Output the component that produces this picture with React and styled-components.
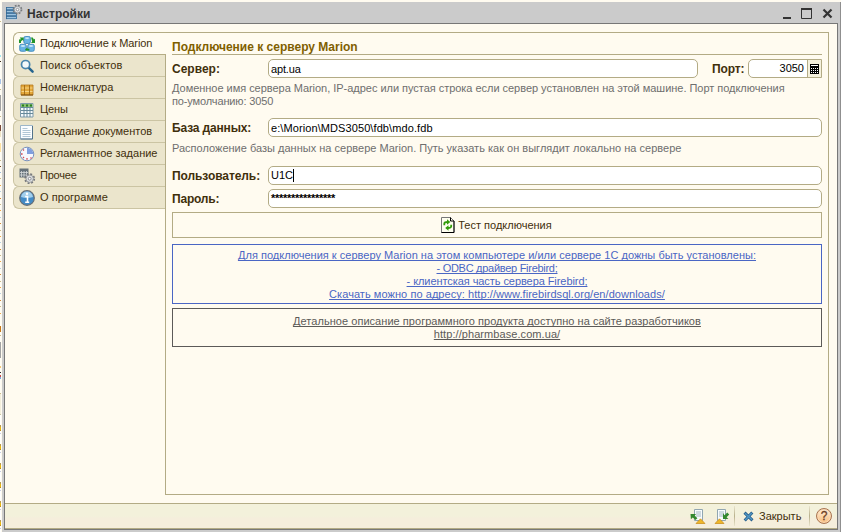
import React from "react";
import styled, { createGlobalStyle } from "styled-components";

const GlobalStyle = createGlobalStyle`
  html, body { margin: 0; padding: 0; overflow: hidden; }
  body {
    background: #fffbf0;
    font: 11px/13px "Liberation Sans", Arial, sans-serif;
    color: #3f2f0c;
  }
  svg { display: block; flex: none; }
`;

const Screen = styled.div`
  display: flex;
  width: 841px;
  height: 532px;
`;

const EdgeStrip = styled.div`
  display: flex;
  flex-direction: column;
  width: 1px;
  margin-right: 1px;
`;

const EdgeMark = styled.div`
  height: ${(p) => p.$size}px;
  flex: none;
  background: ${(p) => p.$color};
`;

const Window = styled.div`
  display: flex;
  flex-direction: column;
  box-sizing: border-box;
  width: 839px;
  height: 530px;
  margin-top: 2px;
  background: #cbcbcb;
  border-right: 1px solid #8f8f8f;
`;

const TitleBar = styled.div`
  display: flex;
  align-items: center;
  height: 21px;
  flex: none;
  padding: 0 2px 0 4px;
`;

const Title = styled.div`
  flex: 1;
  margin-left: 4px;
  padding-top: 3px;
  font-size: 12px;
  font-weight: 700;
  color: #333;
`;

const Client = styled.div`
  display: flex;
  flex-direction: column;
  box-sizing: border-box;
  width: 834px;
  height: 507px;
  margin-left: 2px;
  border: 1px solid #777;
  background: #fffbf0;
`;

const Content = styled.div`
  display: flex;
  box-sizing: border-box;
  height: 479px;
  padding: 8px 8px 8px 8px;
`;

const Tabs = styled.div`
  width: 152px;
  flex: none;
`;

const Tab = styled.div`
  display: flex;
  align-items: center;
  box-sizing: border-box;
  position: relative;
  z-index: ${(p) => (p.$active ? 1 : 0)};
  width: ${(p) => (p.$active ? 153 : 152)}px;
  height: 23px;
  margin-bottom: -1px;
  padding-left: 4px;
  border: 1px solid ${(p) => (p.$active ? "#b5ad85" : "#cbc4a3")};
  border-right: 0;
  border-radius: 6px 0 0 6px;
  background: ${(p) => (p.$active ? "#fffbf0" : "#ebe5cc")};
`;

const TabIcon = styled.div`
  width: 18px;
  height: 18px;
  flex: none;
`;

const TabText = styled.span`
  margin-left: 4px;
  white-space: nowrap;
  letter-spacing: ${(p) => p.$track || 0}px;
`;

const Panel = styled.div`
  box-sizing: border-box;
  width: 664px;
  height: 463px;
  padding: 0 6px;
  border: 1px solid #b3ab85;
`;

const Heading = styled.div`
  box-sizing: border-box;
  height: 22px;
  padding-top: 8px;
  border-bottom: 1px solid #b3ab85;
  font-size: 12px;
  font-weight: 700;
  color: #7f5f00;
`;

const FieldRow = styled.div`
  display: flex;
  height: 19px;
  margin-top: ${(p) => p.$gap}px;
`;

const Label = styled.div`
  width: ${(p) => p.$width}px;
  margin-left: ${(p) => p.$left || 0}px;
  flex: none;
  font-size: 12px;
  font-weight: 700;
  line-height: 20px;
  letter-spacing: ${(p) => p.$track || 0}px;
  white-space: nowrap;
`;

const Field = styled.div`
  display: flex;
  align-items: center;
  box-sizing: border-box;
  width: ${(p) => p.$width}px;
  height: 19px;
  padding-left: 2px;
  padding-top: ${(p) => p.$drop || 0}px;
  border: 1px solid #b3ab85;
  border-radius: 5px;
  background: #fff;
  color: #000;
  letter-spacing: ${(p) => p.$track || 0}px;
`;

const PortField = styled(Field)`
  justify-content: flex-end;
  border-radius: 5px 0 0 5px;
`;

const CalcButton = styled.div`
  display: flex;
  align-items: center;
  justify-content: center;
  width: 13px;
  height: 17px;
  margin-left: 3px;
  border-left: 1px solid #b3ab85;
  background: #f4f0dc;
`;

const Caret = styled.span`
  width: 1px;
  height: 13px;
  background: #000;
`;

const Password = styled.span`
  font-weight: 700;
  letter-spacing: -0.28px;
`;

const Hint = styled.div`
  margin-top: ${(p) => p.$gap}px;
  color: #6e6e6e;
  white-space: nowrap;
`;

const Line = styled.div`
  height: 13px;
  white-space: nowrap;
  letter-spacing: ${(p) => p.$track || 0}px;
`;

const TestButton = styled.div`
  display: flex;
  align-items: center;
  justify-content: center;
  gap: 3px;
  box-sizing: border-box;
  height: 26px;
  margin-top: 4px;
  padding-right: 1px;
  border: 1px solid #b3ab85;
`;

const Notice = styled.div`
  box-sizing: border-box;
  height: ${(p) => p.$height}px;
  margin-top: ${(p) => p.$gap}px;
  padding-top: ${(p) => p.$inset}px;
  border: 1px solid ${(p) => p.$color};
  color: ${(p) => p.$color};
  text-align: center;
  text-decoration: underline;
  text-decoration-skip-ink: none;
  text-underline-offset: 1px;
  text-decoration-thickness: 1px;
`;

const Footer = styled.div`
  display: flex;
  align-items: center;
  justify-content: flex-end;
  box-sizing: border-box;
  height: 26px;
  padding-right: 5px;
  border-top: 1px solid #b3ab85;
  border-bottom: 1px solid #b3ab85;
  background: linear-gradient(#f3f1db 0, #f3f1db 50%, #f5eedc 60%, #f5eedc 100%);
`;

const FileTools = styled.div`
  display: flex;
  gap: 8px;
`;

const Separator = styled.div`
  width: 1px;
  height: 20px;
  margin: 0 ${(p) => p.$right}px 0 ${(p) => p.$left}px;
  background: linear-gradient(#e9e4cc, #b8b08c, #e9e4cc);
`;

const CloseText = styled.span`
  margin-left: 5px;
  width: 45px;
`;

const ICON = { width: 18, height: 18, viewBox: "0 0 18 18" };

const Gear = ({ x, y, s = 1 }) => (
  <g transform={`translate(${x} ${y}) scale(${s})`}>
    <circle r="4.4" fill="none" stroke="#77797c" strokeWidth="2" strokeDasharray="1.9 1.55" />
    <circle r="3.7" fill="#dcdee0" stroke="#898b8e" strokeWidth=".8" />
    <circle r="1.4" fill="#fff" stroke="#77797c" strokeWidth=".8" />
  </g>
);

const TitleIcon = () => (
  <svg width="17" height="17" viewBox="0 0 17 17">
    <path d="M1 3.5h10v12H1z" fill="#cfe2f0" />
    {[3, 6, 9, 12].map((y) => (
      <rect key={y} x=".5" y={y + 0.5} width="10" height="2.2" fill="#9cc3e0" stroke="#2f6795" strokeWidth=".8" />
    ))}
    <Gear x={11.5} y={5.6} s={0.9} />
  </svg>
);

const Cube = ({ x, y }) => (
  <g transform={`translate(${x} ${y})`}>
    <rect x=".5" y=".5" width="6.6" height="7" rx="1.6" fill="#69b4e4" stroke="#3480b9" strokeWidth=".8" />
    <path d="M1.2 2.1Q3.8.2 6.4 2.1 3.8 4.2 1.2 2.1Z" fill="#c8e8fa" />
  </g>
);

const ServersIcon = () => (
  <svg {...ICON}>
    <Cube x={5.3} y={1} />
    <Cube x={1.2} y={8.8} />
    <Cube x={9.2} y={8.8} />
    <g fill="#21942b">
      <path d="M1 8V4.6L3 4.2 1.8 2.4H5.6V6L4.4 5 3 6.4V8Z" />
      <path d="M13 2.4h1.8l1 2.2 1.2-.8V8h-4l1.1-1.4Z" />
      <path d="M7 14.6l2.4-2v1.2h2v1.6h-2v1.2Z" />
    </g>
  </svg>
);

const SearchIcon = () => (
  <svg {...ICON}>
    <path d="M10.8 10.8L14.6 14.6" stroke="#26658f" strokeWidth="2.5" strokeLinecap="round" />
    <circle cx="7.6" cy="7.6" r="4.1" fill="#f3f9fa" stroke="#4a86ad" strokeWidth="1.7" />
  </svg>
);

const BoxIcon = () => (
  <svg {...ICON}>
    <path d="M3 6h12v10H3z" fill="#e4a83b" stroke="#b47a20" strokeWidth=".8" />
    <path d="M3.5 9h11M3.5 12.5h11" stroke="#f6d384" />
    <path d="M6.5 6v10M11.5 6v10" stroke="#a06a16" strokeWidth=".9" />
    <path d="M3 16h12" stroke="#7d4d0b" />
  </svg>
);

const PricesIcon = () => (
  <svg {...ICON}>
    <path d="M2.5 2.5h12.5v13.5H2.5z" fill="#f5fafc" stroke="#7f9bab" />
    <path d="M3 3h11.5v3H3z" fill="#8bbd70" />
    <path d="M3 6.5h12M3 9.5h12M3 12.5h12M6 6v10M9 6v10M12 6v10" stroke="#66899b" />
    <path d="M4 4.5h2M8 4.5h2M12 4.5h2" stroke="#267f24" strokeWidth="1.8" />
  </svg>
);

const DocumentIcon = () => (
  <svg {...ICON}>
    <path d="M2.5 2.5h12v13.5h-12z" fill="#fbfdff" stroke="#9db6c9" />
    <path d="M14.5 3v13h-12" fill="none" stroke="#52728a" />
    <path d="M4.5 5.5h5M4.5 7.5h8M4.5 9.5h8M4.5 11.5h8M4.5 13.5h8" stroke="#b0c6d6" />
  </svg>
);

const ClockIcon = () => (
  <svg {...ICON}>
    <circle cx="9" cy="9" r="6.8" fill="#f6f8ff" stroke="#7890bb" />
    <path d="M9 9V2.8A6.2 6.2 0 0 1 15.2 9Z" fill="#7f9ede" />
    <path d="M5 4.5l1 1M3 9h1.6M9 13v1.8M5 13l1-1M12.5 12.5l1 1" stroke="#d64d55" strokeWidth="1.3" />
  </svg>
);

const OtherIcon = () => (
  <svg {...ICON}>
    <path d="M1.5 1.5h9v9h-9z" fill="#66727a" />
    <path d="M3.5 4v6M6 4v6M8.5 4v6M2 5.5h8M2 8h8" stroke="#d7dbdb" strokeWidth=".8" />
    <Gear x={11.7} y={11.7} />
  </svg>
);

const InfoIcon = () => (
  <svg {...ICON}>
    <circle cx="9" cy="9" r="7.3" fill="#438bc6" stroke="#676d73" strokeWidth="1.2" />
    <path d="M3 8Q4 2.5 9 2.5T15 8Q9 10 3 8Z" fill="#a3cfec" />
    <path d="M7.2 7.5H9.5V13M7.2 13.3h4" stroke="#fff" strokeWidth="1.6" fill="none" />
    <circle cx="9" cy="4.8" r="1.2" fill="#fff" />
  </svg>
);

const RefreshIcon = () => (
  <svg width="14" height="16" viewBox="0 0 14 16">
    <path d="M.5.5h9l3.5 3.5v11.5H.5z" fill="#fffef0" stroke="#777" />
    <path d="M.5 15.5h12.5V4H9.5V.5" fill="none" stroke="#000" />
    <path d="M3.3 8.2V6.5Q3.5 5 6.8 5M10.2 7.8v1.7Q10 11 6.8 11" fill="none" stroke="#329b0b" strokeWidth="1.8" />
    <path d="M6 2.2L9.3 5 6 7.7ZM7.5 8.2L4.2 11l3.3 2.8Z" fill="#329b0b" />
  </svg>
);

const CalcIcon = () => (
  <svg width="9" height="10" viewBox="0 0 9 10" shapeRendering="crispEdges">
    <path d="M0 0h9v10H0z" fill="#000" />
    <path d="M1 1h7v1H1z" fill="#fff" />
    <path d="M1 4.5h7M1 6.5h7M1 8.5h7" stroke="#fff" strokeDasharray="1 1" />
  </svg>
);

const SheetIcon = ({ restore }) => (
  <svg width="16" height="17" viewBox="0 0 16 17">
    <path d={restore ? "M3.5 1.5h8v11h-8z" : "M4.5 1.5h8v11h-8z"} fill="#f8fbfc" stroke="#91a6b1" />
    <path d={restore ? "M5 4h5M5 6h5M5 8h5" : "M6 4h5M6 6h5M6 8h5"} stroke="#a4b8c3" />
    {restore ? (
      <path d="M9 5v6h5.4l-1.8-1.8 2.6-2.6-2-2-2.6 2.6Z" fill="#34882f" />
    ) : (
      <path d="M.5 6h5.6L4.6 7.6 7.4 10.2 5.4 12 2.8 9.4.9 11.2Z" fill="#34882f" />
    )}
    <path d={restore ? "M1 15.5L5.5 10.8 10 15.5Z" : "M6 15.5L10.5 10.8 15 15.5Z"} fill="#eeb72a" stroke="#c78612" strokeWidth=".7" />
  </svg>
);

const CloseIcon = () => (
  <svg width="11" height="11" viewBox="0 0 11 11">
    <path d="M1.5 1.7L9.5 9.3M9.3 1.5L1.7 9.5" stroke="#285f8b" strokeWidth="3" />
    <path d="M2 2.2L9 8.8M8.8 2L2.2 9" stroke="#4f96c4" strokeWidth="1.5" />
  </svg>
);

const HelpGlyph = styled.div`
  box-sizing: border-box;
  width: 16px;
  height: 16px;
  border: 1px solid #a87350;
  border-radius: 50%;
  background: linear-gradient(#ffefda, #f8bd7e);
  box-shadow: inset 0 0 0 1px #fbd9b3;
  color: #6b3c1f;
  font-size: 12px;
  -webkit-text-stroke: 0.3px #6b3c1f;
  line-height: 15px;
  text-align: center;
`;

const WindowControls = () => (
  <svg width="57" height="21" viewBox="0 0 57 21">
    <path d="M2 15h8v2H2z" fill="#333" />
    <path d="M20.5 7h10v9.5h-10z" fill="none" stroke="#333" />
    <path d="M20 6h11v2H20z" fill="#333" />
    <path d="M42.5 7.5l8 8M50.5 7.5l-8 8" stroke="#333" strokeWidth="2.2" />
  </svg>
);

const TABS = [
  { text: "Подключение к Marion", icon: ServersIcon, track: -0.1 },
  { text: "Поиск объектов", icon: SearchIcon, track: 0.15 },
  { text: "Номенклатура", icon: BoxIcon, track: -0.05 },
  { text: "Цены", icon: PricesIcon, track: -0.1 },
  { text: "Создание документов", icon: DocumentIcon },
  { text: "Регламентное задание", icon: ClockIcon },
  { text: "Прочее", icon: OtherIcon, track: -0.2 },
  { text: "О программе", icon: InfoIcon, track: 0.05 },
];

const PAPER = "#fffdf6";
const EDGE = [
  [21, PAPER], [1, "#c9b98a"], [33, PAPER], [2, "#a5e8f0"], [4, PAPER], [1, "#3b2a1a"],
  [17, PAPER], [5, "#a9c3e8"], [5, PAPER], [1, "#c9b98a"], [5, PAPER], [16, "#a3a3a3"],
  [5, PAPER], [1, "#c9b98a"], [8, PAPER], [6, "#7a4a3a"], [6, "#eee3c4"], [6, PAPER],
  [9, "#ffe1a0"], [8, PAPER], [1, "#c9b98a"], [5, PAPER], [1, "#7a4a20"], [5, PAPER], [1, "#9fb8d8"],
  ...Array.from({ length: 22 }, (_, i) => [
    [5.4, PAPER],
    [1, ["#c9b98a", "#f0a848", "#b9cfe0", "#d28a38"][i % 4]],
  ]).flat(),
  [12, PAPER], [6, "#c87818"], [3, PAPER], [1, "#c9b98a"], [6, PAPER], [16, "#a3a3a3"],
  [8, PAPER], [2, "#f4c878"], [4, PAPER], [1, "#222"], [2, PAPER], [2, "#c84848"], [2, "#78a8e0"],
  [14, PAPER], [1, "#c9b98a"], [20, "#f3eedb"], [1, "#c9c6a0"], [10, "#fff"],
  ...Array.from({ length: 6 }, () => [
    [2, "#b99a50"], [3, "#e9b910"], [1, "#b98a20"], [2, "#fff"], [1, "#c8cce0"], [10, "#fff"],
  ]).flat(),
];

export default function App() {
  return (
    <Screen>
      <GlobalStyle />
      <EdgeStrip>
        {EDGE.map(([size, color], i) => (
          <EdgeMark key={i} $size={size} $color={color} />
        ))}
      </EdgeStrip>
      <Window>
        <TitleBar>
          <TitleIcon />
          <Title>Настройки</Title>
          <WindowControls />
        </TitleBar>
        <Client>
          <Content>
            <Tabs>
              {TABS.map(({ text, icon: Icon, track }, i) => (
                <Tab key={text} $active={i === 0}>
                  <TabIcon>
                    <Icon />
                  </TabIcon>
                  <TabText $track={track}>{text}</TabText>
                </Tab>
              ))}
            </Tabs>
            <Panel>
              <Heading>Подключение к серверу Marion</Heading>
              <FieldRow $gap={4}>
                <Label $width={96}>Сервер:</Label>
                <Field $width={430} $track={-0.15} $drop={1}>apt.ua</Field>
                <Label $width={36} $left={14} $track={-0.15}>Порт:</Label>
                <PortField $width={74}>
                  3050
                  <CalcButton>
                    <CalcIcon />
                  </CalcButton>
                </PortField>
              </FieldRow>
              <Hint $gap={4}>
                <Line $track={-0.03}>
                  Доменное имя сервера Marion, IP-адрес или пустая строка если сервер установлен на этой машине. Порт подключения
                </Line>
                <Line $track={-0.13}>по-умолчанию: 3050</Line>
              </Hint>
              <FieldRow $gap={10}>
                <Label $width={96} $track={-0.15}>База данных:</Label>
                <Field $width={554} $track={0.09} $drop={1}>{"e:\\Morion\\MDS3050\\fdb\\mdo.fdb"}</Field>
              </FieldRow>
              <Hint $gap={5}>
                <Line $track={0.01}>
                  Расположение базы данных на сервере Marion. Путь указать как он выглядит локально на сервере
                </Line>
              </Hint>
              <FieldRow $gap={11}>
                <Label $width={96} $track={-0.08}>Пользователь:</Label>
                <Field $width={554}>
                  U1C
                  <Caret />
                </Field>
              </FieldRow>
              <FieldRow $gap={4}>
                <Label $width={96} $track={-0.2}>Пароль:</Label>
                <Field $width={554}>
                  <Password>****************</Password>
                </Field>
              </FieldRow>
              <TestButton>
                <RefreshIcon />
                Тест подключения
              </TestButton>
              <Notice $color="#4a66c4" $height={60} $gap={6} $inset={4}>
                <Line $track={0.02}>
                  Для подключения к серверу Marion на этом компьютере и/или сервере 1С дожны быть установлены:
                </Line>
                <Line $track={-0.28}>- ODBC драйвер Firebird;</Line>
                <Line $track={-0.07}>- клиентская часть сервера Firebird;</Line>
                <Line $track={0.06}>Скачать можно по адресу: http://www.firebirdsql.org/en/downloads/</Line>
              </Notice>
              <Notice $color="#5c5a58" $height={39} $gap={4} $inset={6}>
                <Line $track={0.04}>
                  Детальное описание программного продукта доступно на сайте разработчиков
                </Line>
                <Line $track={0.07}>http://pharmbase.com.ua/</Line>
              </Notice>
            </Panel>
          </Content>
          <Footer>
            <FileTools>
              <SheetIcon />
              <SheetIcon restore />
            </FileTools>
            <Separator $left={4} $right={8} />
            <CloseIcon />
            <CloseText>Закрыть</CloseText>
            <Separator $left={5} $right={6} />
            <HelpGlyph>?</HelpGlyph>
          </Footer>
        </Client>
      </Window>
    </Screen>
  );
}
